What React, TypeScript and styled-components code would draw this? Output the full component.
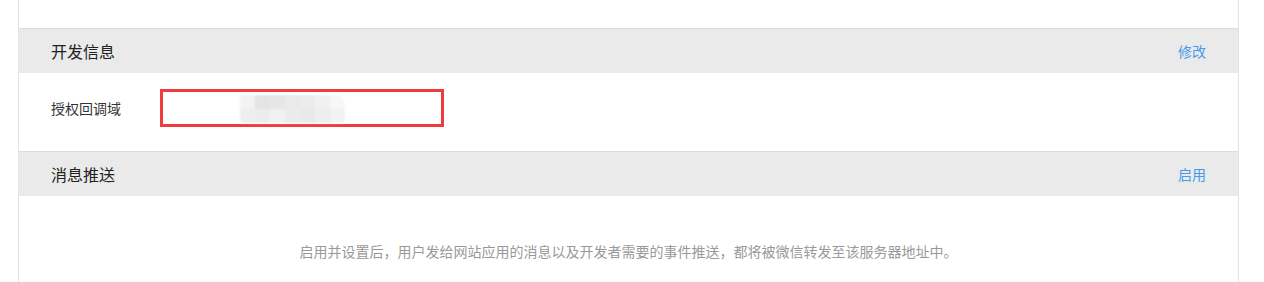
import { createGlobalStyle } from 'styled-components'
import styled from 'styled-components'

const GlobalStyle = createGlobalStyle`
  html, body {
    margin: 0;
    padding: 0;
    background: #ffffff;
  }
  body {
    font-family: "Noto Sans CJK SC", "Noto Sans", sans-serif;
    color: #333333;
  }
`

// mosaic tiles that hide the domain value
const mosaic = [
  ['#f3f3f3', '#e4e4e4', '#e6e6e6', '#eaeaea', '#ececec', '#f0f0f0', '#f7f7f7'],
  ['#eeeeee', '#ececec', '#f1f1f1', '#ebebeb', '#e9e9e9', '#ededed', '#f2f2f2'],
]

export default function App() {
  return (
    <>
      <GlobalStyle />
      <Card>
        <TopSpacer />
        <Section>
          <SectionHeader>
            <SectionTitle>开发信息</SectionTitle>
            <HeaderLink href="#">修改</HeaderLink>
          </SectionHeader>
          <InfoBody>
            <InfoRow>
              <InfoLabel>授权回调域</InfoLabel>
              <HighlightBox>
                <Mosaic>
                  {mosaic.map((row, r) =>
                    row.map((c, i) => (
                      <Tile key={`${r}-${i}`} style={{ background: c }} />
                    ))
                  )}
                </Mosaic>
              </HighlightBox>
            </InfoRow>
          </InfoBody>
        </Section>
        <Section>
          <SectionHeader>
            <SectionTitle>消息推送</SectionTitle>
            <HeaderLink href="#">启用</HeaderLink>
          </SectionHeader>
          <EmptyBody>
            启用并设置后，用户发给网站应用的消息以及开发者需要的事件推送，都将被微信转发至该服务器地址中。
          </EmptyBody>
        </Section>
      </Card>
    </>
  )
}

const Card = styled.div`
  margin-left: 18px;
  width: 1221px;
  box-sizing: border-box;
  border-left: 1px solid #e4e4e4;
  border-right: 1px solid #e4e4e4;
  background: #ffffff;
`

const TopSpacer = styled.div`
  height: 28px;
`

const Section = styled.div`
  border-top: 1px solid #dcdcdc;
`

const SectionHeader = styled.div`
  display: flex;
  align-items: center;
  justify-content: space-between;
  height: 44px;
  padding: 0 32px;
  background: #eaeaea;
`

const SectionTitle = styled.h3`
  margin: 0;
  font-size: 16px;
  font-weight: 400;
  color: #222222;
`

const HeaderLink = styled.a`
  font-size: 14px;
  color: #459ae9;
  text-decoration: none;
`

const InfoBody = styled.div`
  height: 78px;
  padding: 16px 32px 0;
  box-sizing: border-box;
`

const InfoRow = styled.div`
  display: flex;
  align-items: center;
`

const InfoLabel = styled.span`
  width: 109px;
  font-size: 14px;
  color: #333333;
`

const HighlightBox = styled.div`
  width: 284px;
  height: 38px;
  box-sizing: border-box;
  border: 3px solid #f03c3c;
  padding: 1px 0 0 77px;
  display: flex;
  align-items: center;
`

const Mosaic = styled.div`
  display: grid;
  grid-template-columns: repeat(7, 15px);
  grid-template-rows: repeat(2, 14px);
  filter: blur(1px);
  border-radius: 2px 10px 4px 4px;
  overflow: hidden;
`

const Tile = styled.span`
  display: block;
`

const EmptyBody = styled.div`
  height: 90px;
  padding-top: 44px;
  box-sizing: border-box;
  text-align: center;
  font-size: 14px;
  line-height: 22px;
  color: #999999;
`
